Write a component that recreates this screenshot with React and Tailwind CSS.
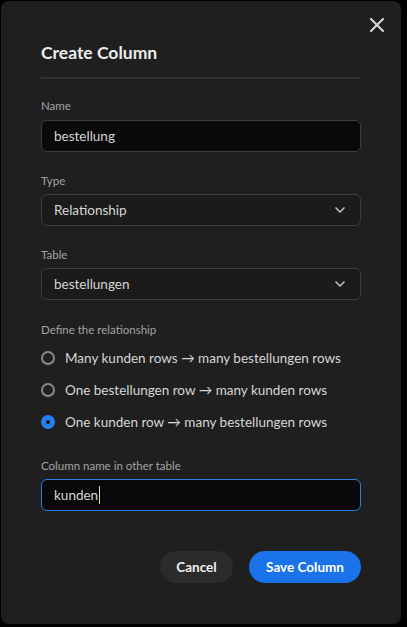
import { X, ChevronDown } from 'lucide-react';

const font = { fontFamily: 'Lato, "Noto Sans", sans-serif' };

function Label({ children, className = '' }) {
  return <div className={`text-[11.5px] leading-4 text-[#a3a3a3] ${className}`}>{children}</div>;
}

function Select({ value }) {
  return (
    <div className="flex h-8 items-center justify-between rounded-md border border-[#3d3d3d] bg-[#1b1b1b] pl-3 pr-[12px]">
      <span className="text-[13.5px] text-[#d6d6d6]">{value}</span>
      <ChevronDown size={16} strokeWidth={2.5} className="text-[#bdbdbd]" />
    </div>
  );
}

function Radio({ checked, children }) {
  return (
    <div className="flex h-8 items-center gap-[10px]">
      {checked ? (
        <span className="flex h-[14px] w-[14px] items-center justify-center rounded-full bg-[#2280f2]">
          <span className="h-[4px] w-[4px] rounded-full bg-[#151515]" />
        </span>
      ) : (
        <span className="h-[14px] w-[14px] rounded-full border-2 border-[#8a8a8a]" />
      )}
      <span className="text-[13.5px] text-[#d6d6d6]">{children}</span>
    </div>
  );
}

export default function App() {
  return (
    <div className="h-[627px] w-[407px] bg-black pl-px pt-px" style={font}>
      <div className="relative h-[623px] w-[400px] rounded-lg bg-[#1f1f1f] px-10 pt-[38px]">
        <button className="absolute right-[12px] top-[12px] text-[#d2d2d2]">
          <X size={24} strokeWidth={2.2} />
        </button>

        <h2 className="text-[17.5px] font-bold leading-7 text-[#ececec]">Create Column</h2>
        <div className="mt-[10px] h-[2px] bg-[#313131]" />

        <Label className="mt-[19px]">Name</Label>
        <div className="mt-[6px] flex h-8 items-center rounded-md border border-[#3d3d3d] bg-[#090909] px-3">
          <span className="text-[13.5px] text-[#d6d6d6]">bestellung</span>
        </div>

        <Label className="mt-[21px]">Type</Label>
        <div className="mt-[5px]"><Select value="Relationship" /></div>

        <Label className="mt-[21px]">Table</Label>
        <div className="mt-[5px]"><Select value="bestellungen" /></div>

        <Label className="mt-[22px]">Define the relationship</Label>
        <div className="mt-[4px]">
          <Radio>Many kunden rows → many bestellungen rows</Radio>
          <Radio>One bestellungen row → many kunden rows</Radio>
          <Radio checked>One kunden row → many bestellungen rows</Radio>
        </div>

        <Label className="mt-[20px]">Column name in other table</Label>
        <div className="mt-[5px] flex h-8 items-center rounded-md border border-[#2a7fe6] bg-[#090909] px-3">
          <span className="text-[13.5px] text-[#d6d6d6]">kunden</span>
          <span className="ml-px h-[18px] w-px bg-[#d6d6d6]" />
        </div>

        <div className="mt-[40px] flex justify-end gap-4">
          <button className="h-8 w-[73px] rounded-full bg-[#2b2b2b] text-[13.5px] font-bold text-[#f2f2f2]">Cancel</button>
          <button className="h-8 w-[112px] rounded-full bg-[#1a73e8] text-[13.5px] font-bold text-white">Save Column</button>
        </div>
      </div>
    </div>
  );
}
